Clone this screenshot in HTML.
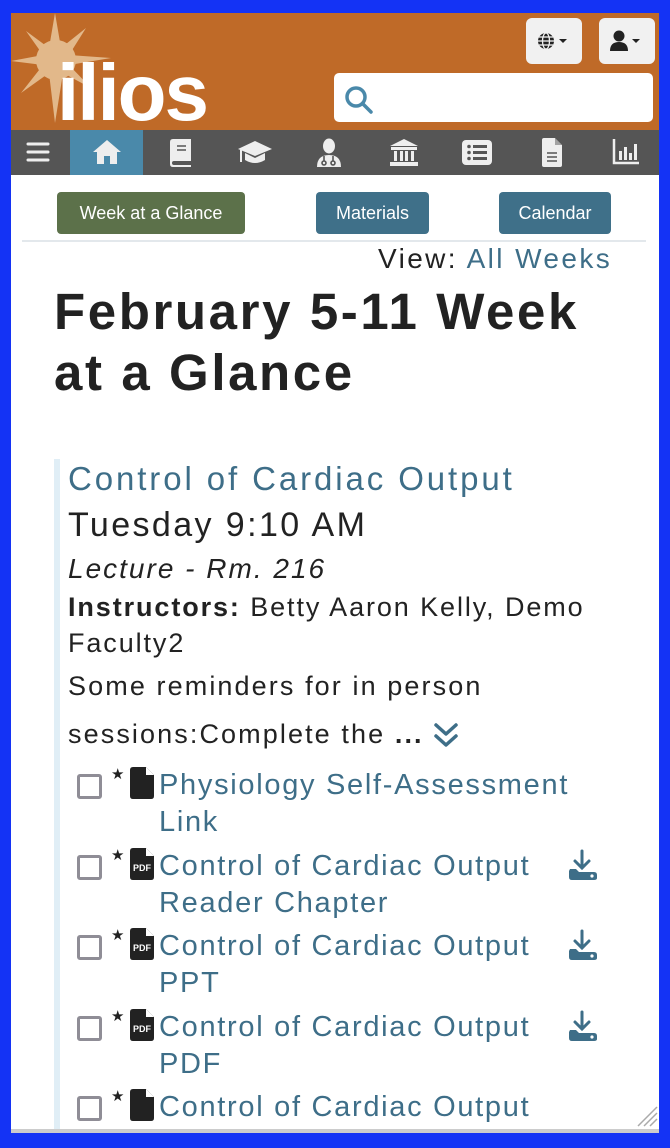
<!DOCTYPE html>
<html><head><meta charset="utf-8"><style>
*{box-sizing:border-box;margin:0;padding:0}
body{width:670px;height:1148px;background:#1433f5;font-family:"Liberation Sans",sans-serif;position:relative;overflow:hidden}
#page{position:absolute;left:11px;top:13px;width:648px;height:1120px;background:#fff;overflow:hidden}
#hdr{position:absolute;left:0;top:0;width:648px;height:117px;background:#bf6a28}
.abs{position:absolute}
.tb{position:absolute;top:5px;width:56px;height:46px;background:#f1f1f1;border-radius:6px}
#nav{position:absolute;left:0;top:117px;width:648px;height:45px;background:#555}
.btn{position:absolute;top:179px;height:42px;border-radius:4px;color:#fff;font-size:18px;line-height:42px;text-align:center}
.lnk{color:#3e6e88}
.it{position:absolute;left:0;width:520px;font-size:29px;color:#3e6e88;line-height:37px;letter-spacing:1.7px}
.cb{position:absolute;left:66px;width:25px;height:25px;border:3px solid #8f8d96;border-radius:3px}
.st{position:absolute;left:100px;font-size:15px;color:#222}
.fi{position:absolute;left:119px;width:24px;height:32px}
.tx{position:absolute;left:148px}
.dl{position:absolute;left:556px;width:32px;height:32px}
</style></head><body>
<div id="page">
<div id="hdr">
<svg class="abs" style="left:0;top:0" width="110" height="117" viewBox="0 0 110 117">
<g fill="#e2b88a">
<polygon points="44,0 50,35 75,15 58,42 100,45 58,52 80,75 52,60 44,110 38,60 10,80 32,52 0,48 32,42 15,18 38,35"/>
<circle cx="45" cy="47" r="20"/>
</g></svg>
<div class="abs" style="left:46px;top:30px;font-size:80px;font-weight:bold;color:#fff;letter-spacing:-2px;line-height:100px">ilios</div>
<div class="tb" style="left:515px"><svg class="abs" style="left:10px;top:13px" width="36" height="20" viewBox="0 0 36 20"><circle cx="10" cy="10" r="8" fill="#222"/><g stroke="#f1f1f1" stroke-width="1.3" fill="none"><ellipse cx="10" cy="10" rx="3.5" ry="8"/><line x1="2" y1="10" x2="18" y2="10"/><line x1="3" y1="6" x2="17" y2="6"/><line x1="3" y1="14" x2="17" y2="14"/></g><polygon points="23,8 31,8 27,12" fill="#222"/></svg></div>
<div class="tb" style="left:588px"><svg class="abs" style="left:10px;top:12px" width="36" height="22" viewBox="0 0 36 22"><circle cx="10" cy="6" r="5.5" fill="#222"/><path d="M1 21 Q1 12 10 12 Q19 12 19 21Z" fill="#222"/><polygon points="23,9 31,9 27,13" fill="#222"/></svg></div>
<div class="abs" style="left:323px;top:60px;width:319px;height:49px;background:#fff;border-radius:5px"><svg class="abs" style="left:10px;top:12px" width="30" height="30" viewBox="0 0 30 30"><circle cx="12" cy="12" r="9" stroke="#4a89aa" stroke-width="3.5" fill="none"/><line x1="18.5" y1="18.5" x2="27" y2="27" stroke="#4a89aa" stroke-width="3.5" stroke-linecap="round"/></svg></div>
</div>
<div id="nav">
<svg class="abs" style="left:15px;top:10px" width="24" height="24" viewBox="0 0 24 24"><g stroke="#eee" stroke-width="3" stroke-linecap="round"><line x1="2" y1="4" x2="22" y2="4"/><line x1="2" y1="12" x2="22" y2="12"/><line x1="2" y1="20" x2="22" y2="20"/></g></svg>
<div class="abs" style="left:59px;top:0;width:73px;height:45px;background:#4a89aa"></div>
<svg class="abs" style="left:81px;top:9px" width="30" height="26" viewBox="0 0 30 26"><path d="M15 1 L29 13 L25 13 L25 25 L18 25 L18 17 L12 17 L12 25 L5 25 L5 13 L1 13Z" fill="#eee"/></svg>
<svg class="abs" style="left:159px;top:9px" width="22" height="28" viewBox="0 0 22 28"><path d="M3 0 H21 V22 H4 Q2 22 2 24 Q2 26 4 26 H21 V28 H3 Q0 28 0 25 V3 Q0 0 3 0Z" fill="#eee"/><g stroke="#555" stroke-width="1.5"><line x1="7" y1="7" x2="16" y2="7"/><line x1="7" y1="11" x2="16" y2="11"/></g></svg>
<svg class="abs" style="left:226px;top:10px" width="36" height="26" viewBox="0 0 36 26"><polygon points="18,1 35,9 18,16 1,9" fill="#eee"/><path d="M8 13 V20 Q18 26 28 20 V13 L18 18Z" fill="#eee"/><line x1="4" y1="10" x2="4" y2="22" stroke="#eee" stroke-width="2"/></svg>
<svg class="abs" style="left:305px;top:8px" width="26" height="30" viewBox="0 0 26 30"><ellipse cx="13" cy="8" rx="6" ry="7.5" fill="#eee"/><path d="M1 29 Q1 17 13 17 Q25 17 25 29Z" fill="#eee"/><g stroke="#555" stroke-width="1.6" fill="none"><circle cx="8" cy="25" r="2"/><circle cx="17" cy="25" r="2"/><path d="M8 18 V23 M17 18 V23"/></g></svg>
<svg class="abs" style="left:378px;top:9px" width="30" height="28" viewBox="0 0 30 28"><polygon points="15,0 29,7 1,7" fill="#eee"/><rect x="2" y="8" width="26" height="3" fill="#eee"/><g fill="#eee"><rect x="5" y="12" width="3" height="10"/><rect x="11" y="12" width="3" height="10"/><rect x="16" y="12" width="3" height="10"/><rect x="22" y="12" width="3" height="10"/></g><rect x="1" y="23" width="28" height="4" fill="#eee"/></svg>
<svg class="abs" style="left:451px;top:10px" width="30" height="25" viewBox="0 0 30 25"><rect x="0" y="0" width="30" height="25" rx="4" fill="#eee"/><g fill="#555"><circle cx="7" cy="6.5" r="1.8"/><circle cx="7" cy="12.5" r="1.8"/><circle cx="7" cy="18.5" r="1.8"/><rect x="11" y="5" width="14" height="3"/><rect x="11" y="11" width="14" height="3"/><rect x="11" y="17" width="14" height="3"/></g></svg>
<svg class="abs" style="left:531px;top:8px" width="20" height="29" viewBox="0 0 20 29"><path d="M2 0 H13 L20 7 V27 Q20 29 18 29 H2 Q0 29 0 27 V2 Q0 0 2 0Z" fill="#eee"/><g stroke="#555" stroke-width="1.5"><line x1="5" y1="15" x2="15" y2="15"/><line x1="5" y1="19" x2="15" y2="19"/><line x1="5" y1="23" x2="15" y2="23"/></g><path d="M13 0 V7 H20" fill="#555" opacity=".5"/></svg>
<svg class="abs" style="left:601px;top:9px" width="28" height="26" viewBox="0 0 28 26"><path d="M2 0 V24 H27" stroke="#eee" stroke-width="2.5" fill="none"/><g fill="#eee"><rect x="7" y="12" width="3" height="9"/><rect x="12" y="8" width="3" height="13"/><rect x="17" y="14" width="3" height="7"/><rect x="22" y="5" width="3" height="16"/></g></svg>
</div>
<div class="btn" style="left:46px;width:188px;background:#5c714a">Week at a Glance</div>
<div class="btn" style="left:305px;width:113px;background:#3f7089">Materials</div>
<div class="btn" style="left:488px;width:112px;background:#3f7089">Calendar</div>
<div class="abs" style="left:11px;top:227px;width:624px;height:2px;background:#e3e8ec"></div>
<div class="abs" style="left:367px;top:230px;font-size:28px;color:#222;letter-spacing:2.4px;white-space:nowrap">View: <span class="lnk">All Weeks</span></div>
<div class="abs" style="left:43px;top:268px;font-size:51px;font-weight:bold;color:#222;line-height:61px;letter-spacing:2.6px;white-space:nowrap">February 5-11 Week<br>at a Glance</div>
<div class="abs" style="left:43px;top:446px;width:6px;height:680px;background:#e0eef6"></div>
<div class="abs" style="left:57px;top:447px;font-size:33px;color:#3e6e88;letter-spacing:2.9px;white-space:nowrap">Control of Cardiac Output</div>
<div class="abs" style="left:57px;top:493px;font-size:34px;color:#222;letter-spacing:2.4px;white-space:nowrap">Tuesday 9:10 AM</div>
<div class="abs" style="left:57px;top:540px;font-size:28px;color:#222;font-style:italic;letter-spacing:2px;white-space:nowrap">Lecture - Rm. 216</div>
<div class="abs" style="left:57px;top:576px;font-size:27px;color:#222;line-height:36px;letter-spacing:1.9px;white-space:nowrap"><b>Instructors:</b> Betty Aaron Kelly, Demo<br>Faculty2</div>
<div class="abs" style="left:57px;top:649px;font-size:27px;color:#222;line-height:48px;letter-spacing:2.1px;white-space:nowrap">Some reminders for in person<br>sessions:Complete the <b>...</b></div>
<svg class="abs" style="left:421px;top:708px" width="28" height="30" viewBox="0 0 28 30"><g stroke="#3e6e88" stroke-width="3.5" fill="none" stroke-linecap="round" stroke-linejoin="round"><path d="M4 4 L14 13 L24 4"/><path d="M4 15 L14 24 L24 15"/></g></svg>

<div class="cb" style="top:761px"></div><div class="st" style="top:752px">★</div>
<svg class="fi" style="top:754px" viewBox="0 0 24 32"><path d="M3 0 H16 L24 8 V29 Q24 32 21 32 H3 Q0 32 0 29 V3 Q0 0 3 0Z" fill="#222"/><path d="M16 0 V8 H24" fill="#fff"/></svg>
<div class="it tx" style="top:754px">Physiology Self-Assessment<br>Link</div>

<div class="cb" style="top:842px"></div><div class="st" style="top:833px">★</div>
<svg class="fi" style="top:835px" viewBox="0 0 24 32"><path d="M3 0 H16 L24 8 V29 Q24 32 21 32 H3 Q0 32 0 29 V3 Q0 0 3 0Z" fill="#222"/><path d="M16 0 V8 H24" fill="#fff"/><text x="12" y="23" font-size="9" fill="#fff" text-anchor="middle" font-family="Liberation Sans" font-weight="bold">PDF</text></svg>
<div class="it tx" style="top:835px">Control of Cardiac Output<br>Reader Chapter</div>
<svg class="dl" style="top:836px" viewBox="0 0 32 32"><g stroke="#3e6e88" stroke-width="3" fill="none" stroke-linecap="round"><line x1="15" y1="2" x2="15" y2="18"/><path d="M8 12 L15 19 L22 12"/></g><path d="M3 20 H9 L12 23 H27 Q30 23 30 26 V29 Q30 31 27 31 H5 Q2 31 2 28 V22Z" fill="#3e6e88"/><circle cx="25" cy="27" r="1.6" fill="#fff"/></svg>

<div class="cb" style="top:922px"></div><div class="st" style="top:913px">★</div>
<svg class="fi" style="top:915px" viewBox="0 0 24 32"><path d="M3 0 H16 L24 8 V29 Q24 32 21 32 H3 Q0 32 0 29 V3 Q0 0 3 0Z" fill="#222"/><path d="M16 0 V8 H24" fill="#fff"/><text x="12" y="23" font-size="9" fill="#fff" text-anchor="middle" font-family="Liberation Sans" font-weight="bold">PDF</text></svg>
<div class="it tx" style="top:915px">Control of Cardiac Output<br>PPT</div>
<svg class="dl" style="top:916px" viewBox="0 0 32 32"><g stroke="#3e6e88" stroke-width="3" fill="none" stroke-linecap="round"><line x1="15" y1="2" x2="15" y2="18"/><path d="M8 12 L15 19 L22 12"/></g><path d="M3 20 H9 L12 23 H27 Q30 23 30 26 V29 Q30 31 27 31 H5 Q2 31 2 28 V22Z" fill="#3e6e88"/><circle cx="25" cy="27" r="1.6" fill="#fff"/></svg>

<div class="cb" style="top:1003px"></div><div class="st" style="top:994px">★</div>
<svg class="fi" style="top:996px" viewBox="0 0 24 32"><path d="M3 0 H16 L24 8 V29 Q24 32 21 32 H3 Q0 32 0 29 V3 Q0 0 3 0Z" fill="#222"/><path d="M16 0 V8 H24" fill="#fff"/><text x="12" y="23" font-size="9" fill="#fff" text-anchor="middle" font-family="Liberation Sans" font-weight="bold">PDF</text></svg>
<div class="it tx" style="top:996px">Control of Cardiac Output<br>PDF</div>
<svg class="dl" style="top:997px" viewBox="0 0 32 32"><g stroke="#3e6e88" stroke-width="3" fill="none" stroke-linecap="round"><line x1="15" y1="2" x2="15" y2="18"/><path d="M8 12 L15 19 L22 12"/></g><path d="M3 20 H9 L12 23 H27 Q30 23 30 26 V29 Q30 31 27 31 H5 Q2 31 2 28 V22Z" fill="#3e6e88"/><circle cx="25" cy="27" r="1.6" fill="#fff"/></svg>

<div class="cb" style="top:1083px"></div><div class="st" style="top:1074px">★</div>
<svg class="fi" style="top:1076px" viewBox="0 0 24 32"><path d="M3 0 H16 L24 8 V29 Q24 32 21 32 H3 Q0 32 0 29 V3 Q0 0 3 0Z" fill="#222"/><path d="M16 0 V8 H24" fill="#fff"/></svg>
<div class="it tx" style="top:1076px">Control of Cardiac Output</div>
<svg class="abs" style="left:625px;top:1092px" width="22" height="22" viewBox="0 0 22 22"><g stroke="#aaa" stroke-width="1.5"><line x1="2" y1="21" x2="21" y2="2"/><line x1="8" y1="21" x2="21" y2="8"/><line x1="14" y1="21" x2="21" y2="14"/></g></svg>
<div class="abs" style="left:0;top:1116px;width:648px;height:4px;background:#ccc"></div>
</div>
</body></html>
